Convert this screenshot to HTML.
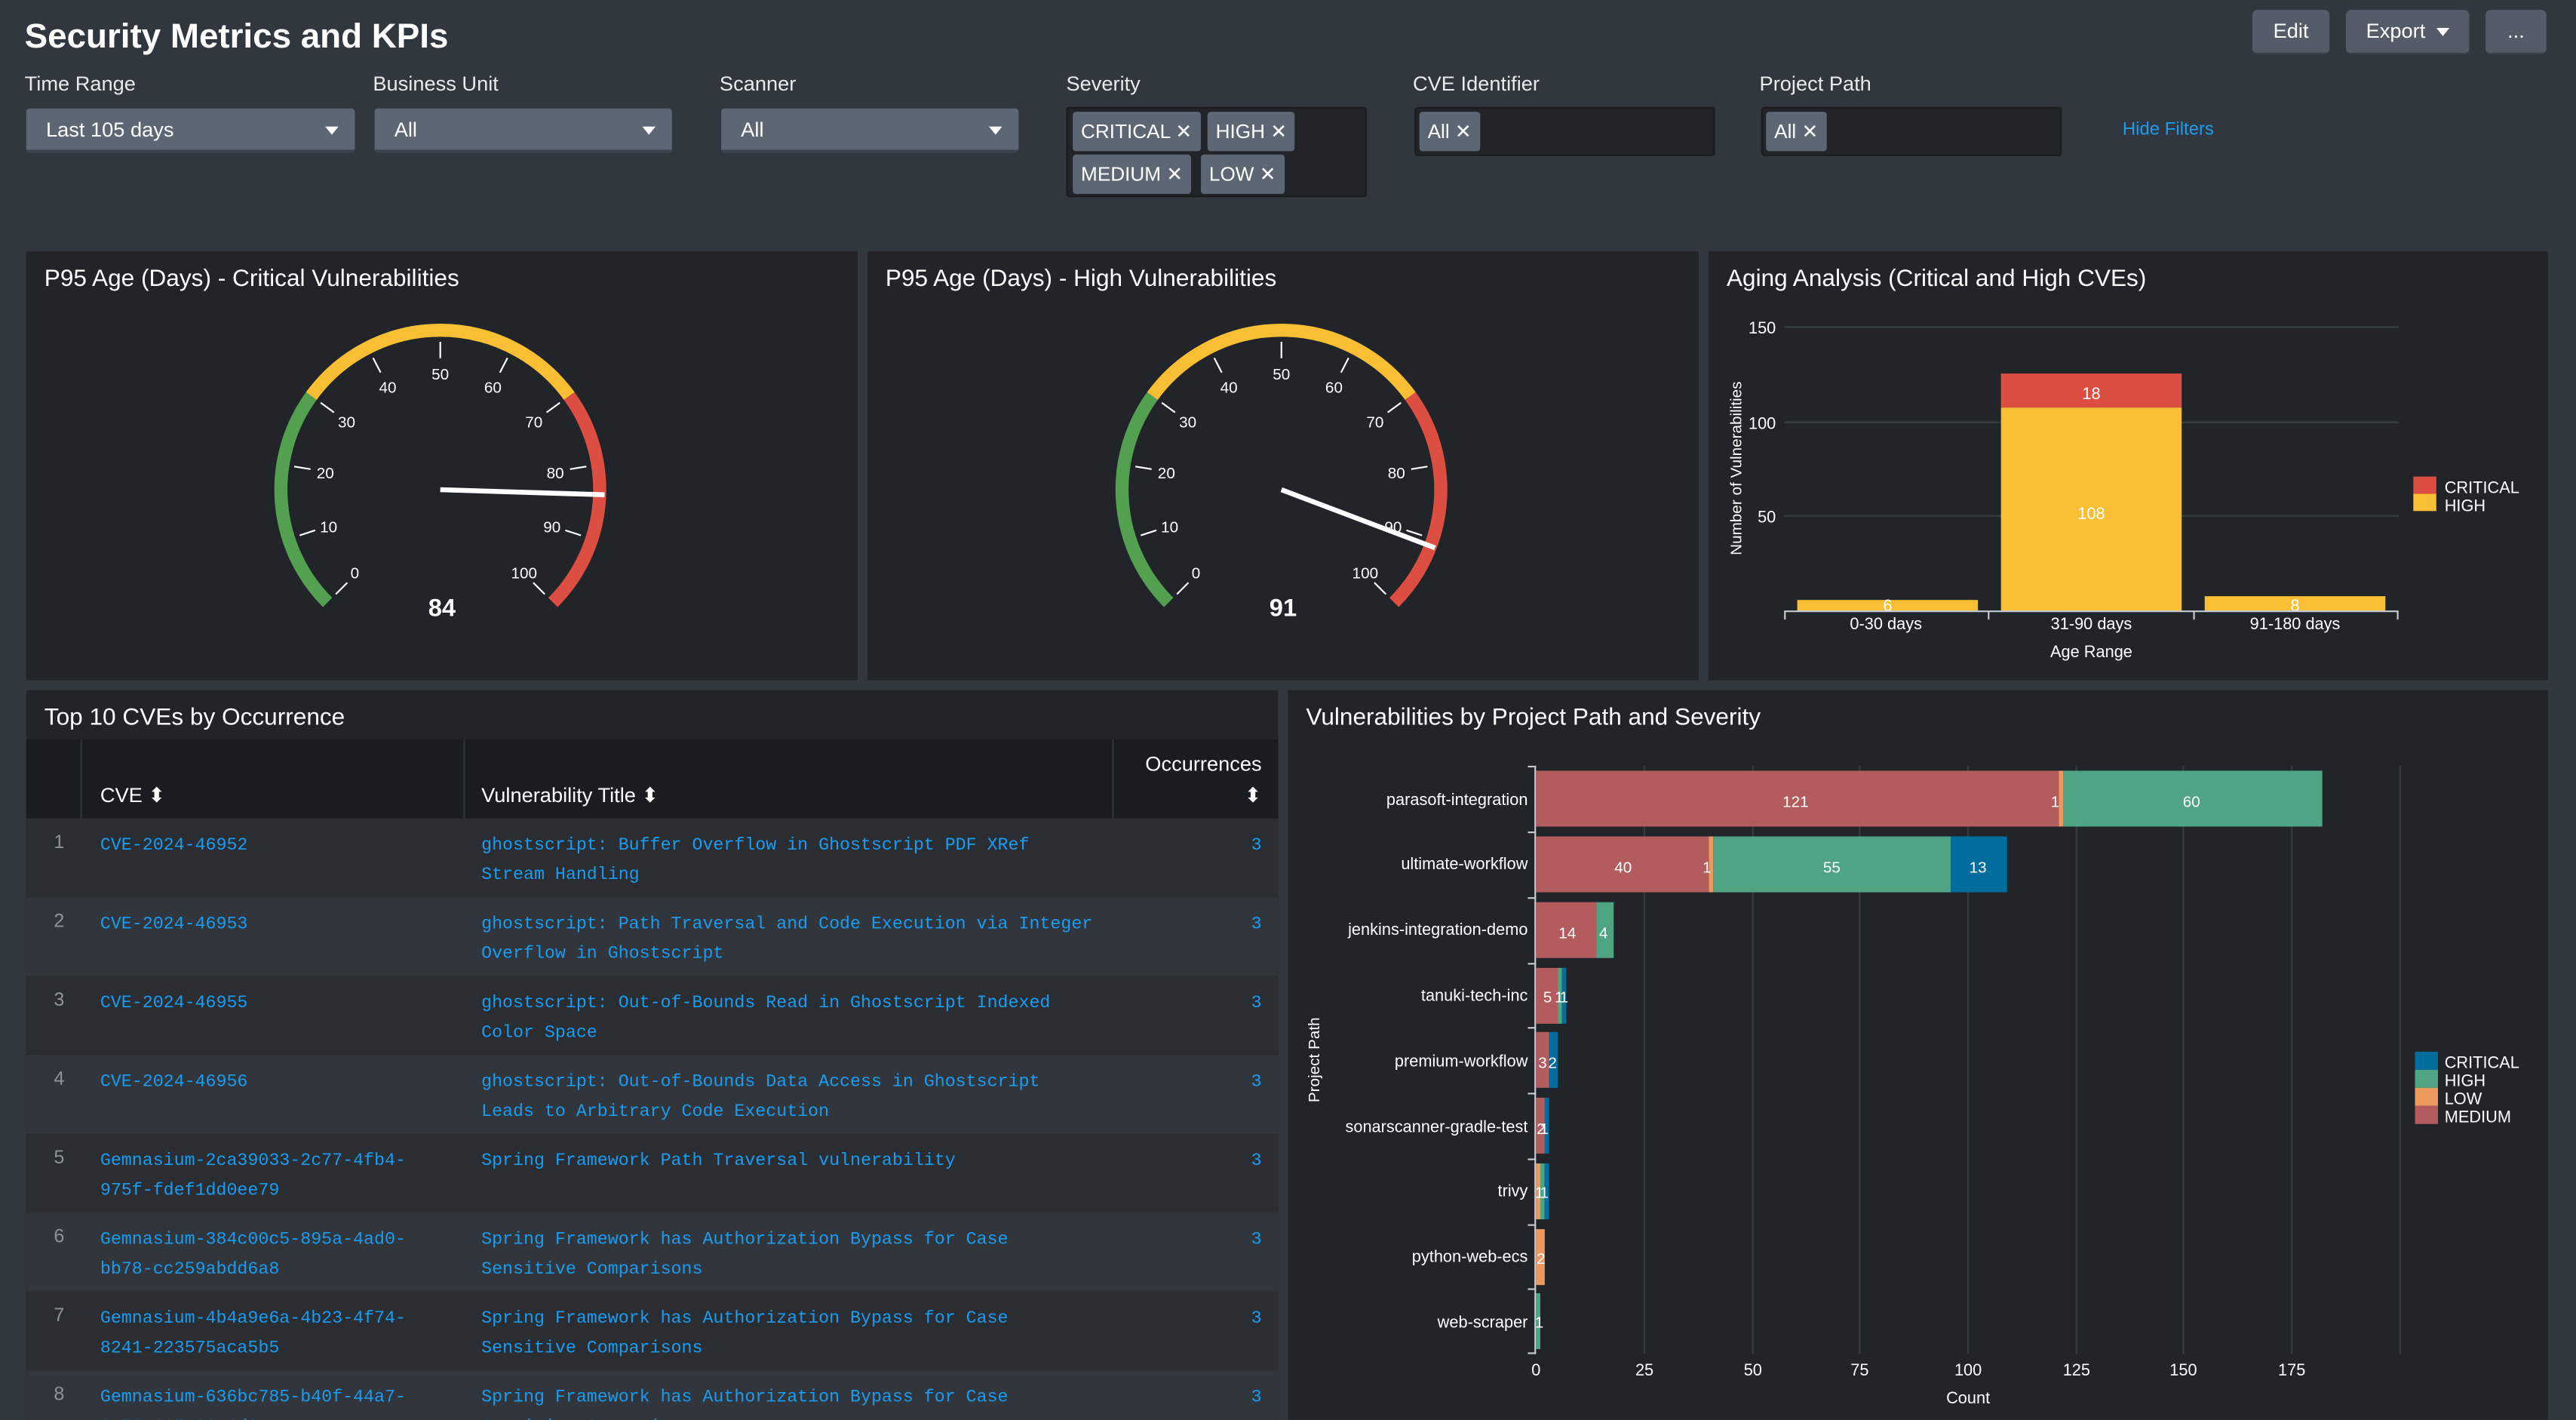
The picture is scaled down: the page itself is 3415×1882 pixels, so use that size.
<!DOCTYPE html>
<html><head><meta charset="utf-8"><style>
*{margin:0;padding:0;box-sizing:border-box}
html,body{width:3415px;height:1882px;overflow:hidden;background:#31373e}
#w{position:absolute;left:0;top:0;width:1568px;height:864px;transform:scale(2.1779);transform-origin:0 0;font-family:"Liberation Sans",sans-serif;color:#fff}
.a{position:absolute}
.lbl{font-size:12.5px;color:#e8eaec}
.inp{position:absolute;height:27px;background:#5c6773;border-radius:2px;border-bottom:2px solid #3c444d;font-size:12.5px;padding:6px 12px}
.inp .car{position:absolute;right:10px;top:11px;width:0;height:0;border-left:4px solid transparent;border-right:4px solid transparent;border-top:5px solid #fff}
.ms{position:absolute;background:#212428;border:1px solid #1a1d20;border-radius:2px}
.chip{position:absolute;height:24px;background:#5c6773;border-radius:2px;font-size:12px;padding:5px 5px;white-space:nowrap}
.btn{position:absolute;top:6px;height:27px;background:#535c67;border-radius:3px;font-size:12.5px;text-align:center;line-height:27px;border-bottom:1px solid #3c444d}
.pnl{position:absolute;background:#212428}
.pt{position:absolute;left:11px;top:9px;font-size:14.5px;color:#fff}
.row{position:absolute;left:0;width:762px;height:48px}
.mono{font-family:"Liberation Mono",monospace;font-size:10.7px;color:#1a9cf0;line-height:18px}
.idx{position:absolute;left:0;width:40px;text-align:center;top:9px;font-size:11.5px;color:#8b949e}
.cv{position:absolute;left:45px;top:8px}
.tt{position:absolute;left:277px;top:8px}
.oc{position:absolute;right:10px;top:8px}
</style></head><body><div id="w">
<div class="a" style="left:15px;top:11px;font-size:21px;font-weight:bold">Security Metrics and KPIs</div>
<div class="btn" style="left:1371px;width:47px">Edit</div>
<div class="btn" style="left:1428px;width:75px">Export <span style="display:inline-block;border-left:4px solid transparent;border-right:4px solid transparent;border-top:5px solid #fff;vertical-align:middle;margin-left:3px"></span></div>
<div class="btn" style="left:1513px;width:37px">...</div>

<div class="a lbl" style="left:15px;top:44px">Time Range</div>
<div class="a lbl" style="left:227px;top:44px">Business Unit</div>
<div class="a lbl" style="left:438px;top:44px">Scanner</div>
<div class="a lbl" style="left:649px;top:44px">Severity</div>
<div class="a lbl" style="left:860px;top:44px">CVE Identifier</div>
<div class="a lbl" style="left:1071px;top:44px">Project Path</div>
<div class="inp" style="left:16px;top:66px;width:200px">Last 105 days<div class="car"></div></div>
<div class="inp" style="left:228px;top:66px;width:181px">All<div class="car"></div></div>
<div class="inp" style="left:439px;top:66px;width:181px">All<div class="car"></div></div>
<div class="ms" style="left:649px;top:65px;width:183px;height:55px">
<div class="chip" style="left:3px;top:2px">CRITICAL ✕</div>
<div class="chip" style="left:85px;top:2px">HIGH ✕</div>
<div class="chip" style="left:3px;top:28px">MEDIUM ✕</div>
<div class="chip" style="left:81px;top:28px">LOW ✕</div>
</div>
<div class="ms" style="left:861px;top:65px;width:183px;height:30px"><div class="chip" style="left:2px;top:2px">All ✕</div></div>
<div class="ms" style="left:1072px;top:65px;width:183px;height:30px"><div class="chip" style="left:2px;top:2px">All ✕</div></div>
<div class="a" style="left:1292px;top:73px;font-size:11px;color:#1a9cf0">Hide Filters</div>

<div class="pnl" style="left:16px;top:153px;width:506px;height:261px"><div class="pt">P95 Age (Days) - Critical Vulnerabilities</div></div>
<div class="pnl" style="left:528px;top:153px;width:506px;height:261px"><div class="pt">P95 Age (Days) - High Vulnerabilities</div></div>
<div class="pnl" style="left:1040px;top:153px;width:511px;height:261px"><div class="pt">Aging Analysis (Critical and High CVEs)</div></div>
<div class="pnl" style="left:16px;top:420px;width:762px;height:444px;overflow:hidden"><div class="pt">Top 10 CVEs by Occurrence</div>
<div class="a" style="left:0;top:30px;width:762px;height:48px;background:#191c20"></div>
<div class="a" style="left:33px;top:30px;width:1px;height:48px;background:#2e3540"></div>
<div class="a" style="left:266px;top:30px;width:1px;height:48px;background:#2e3540"></div>
<div class="a" style="left:661px;top:30px;width:1px;height:48px;background:#2e3540"></div>
<div class="a" style="left:45px;top:56px;font-size:12.5px">CVE ⬍</div>
<div class="a" style="left:277px;top:56px;font-size:12.5px">Vulnerability Title ⬍</div>
<div class="a" style="right:10px;top:38px;font-size:12.5px">Occurrences</div>
<div class="a" style="right:10px;top:56px;font-size:12.5px">⬍</div>
<div class="row" style="top:78px;background:#2a2e33"><div class="idx">1</div><div class="mono cv">CVE-2024-46952</div><div class="mono tt">ghostscript: Buffer Overflow in Ghostscript PDF XRef<br>Stream Handling</div><div class="mono oc">3</div></div>
<div class="row" style="top:126px;background:#31363c"><div class="idx">2</div><div class="mono cv">CVE-2024-46953</div><div class="mono tt">ghostscript: Path Traversal and Code Execution via Integer<br>Overflow in Ghostscript</div><div class="mono oc">3</div></div>
<div class="row" style="top:174px;background:#2a2e33"><div class="idx">3</div><div class="mono cv">CVE-2024-46955</div><div class="mono tt">ghostscript: Out-of-Bounds Read in Ghostscript Indexed<br>Color Space</div><div class="mono oc">3</div></div>
<div class="row" style="top:222px;background:#31363c"><div class="idx">4</div><div class="mono cv">CVE-2024-46956</div><div class="mono tt">ghostscript: Out-of-Bounds Data Access in Ghostscript<br>Leads to Arbitrary Code Execution</div><div class="mono oc">3</div></div>
<div class="row" style="top:270px;background:#2a2e33"><div class="idx">5</div><div class="mono cv">Gemnasium-2ca39033-2c77-4fb4-<br>975f-fdef1dd0ee79</div><div class="mono tt">Spring Framework Path Traversal vulnerability</div><div class="mono oc">3</div></div>
<div class="row" style="top:318px;background:#31363c"><div class="idx">6</div><div class="mono cv">Gemnasium-384c00c5-895a-4ad0-<br>bb78-cc259abdd6a8</div><div class="mono tt">Spring Framework has Authorization Bypass for Case<br>Sensitive Comparisons</div><div class="mono oc">3</div></div>
<div class="row" style="top:366px;background:#2a2e33"><div class="idx">7</div><div class="mono cv">Gemnasium-4b4a9e6a-4b23-4f74-<br>8241-223575aca5b5</div><div class="mono tt">Spring Framework has Authorization Bypass for Case<br>Sensitive Comparisons</div><div class="mono oc">3</div></div>
<div class="row" style="top:414px;background:#31363c"><div class="idx">8</div><div class="mono cv">Gemnasium-636bc785-b40f-44a7-<br>3c71-115c03a1d0ee</div><div class="mono tt">Spring Framework has Authorization Bypass for Case<br>Sensitive Comparisons</div><div class="mono oc">3</div></div>
</div>
<div class="pnl" style="left:784px;top:420px;width:767px;height:444px"><div class="pt">Vulnerabilities by Project Path and Severity</div></div>

<svg class="a" style="left:0;top:0" width="1568" height="864" font-family="Liberation Sans, sans-serif">
<g transform="translate(268,298)" fill="#fff" font-size="9.5" text-anchor="middle">
<path d="M -68.6 68.6 A 97 97 0 0 1 -78.5 -57.0" stroke="#53a051" stroke-width="8" fill="none"/>
<path d="M -78.5 -57.0 A 97 97 0 0 1 78.5 -57.0" stroke="#f8be34" stroke-width="8" fill="none"/>
<path d="M 78.5 -57.0 A 97 97 0 0 1 68.6 68.6" stroke="#dc4e41" stroke-width="8" fill="none"/>
<g stroke="#fff" stroke-width="1">
<line x1="-63.6" y1="63.6" x2="-56.6" y2="56.6"/><line x1="-85.6" y1="27.8" x2="-76.1" y2="24.7"/><line x1="-88.9" y1="-14.1" x2="-79" y2="-12.5"/><line x1="-72.8" y1="-52.9" x2="-64.7" y2="-47"/><line x1="-40.9" y1="-80.2" x2="-36.3" y2="-71.3"/><line x1="0" y1="-90" x2="0" y2="-80"/><line x1="40.9" y1="-80.2" x2="36.3" y2="-71.3"/><line x1="72.8" y1="-52.9" x2="64.7" y2="-47"/><line x1="88.9" y1="-14.1" x2="79" y2="-12.5"/><line x1="85.6" y1="27.8" x2="76.1" y2="24.7"/><line x1="63.6" y1="63.6" x2="56.6" y2="56.6"/>
</g>
<text x="-52" y="54">0</text><text x="-68" y="26">10</text><text x="-70" y="-7">20</text><text x="-57" y="-38">30</text><text x="-32" y="-59">40</text><text x="0" y="-67">50</text><text x="32" y="-59">60</text><text x="57" y="-38">70</text><text x="70" y="-7">80</text><text x="68" y="26">90</text><text x="51" y="54">100</text>
<line x1="0" y1="0" x2="100" y2="3.1" stroke="#fff" stroke-width="3"/>
<text x="1" y="77" font-size="15" font-weight="bold">84</text>
</g>
<g transform="translate(780,298)" fill="#fff" font-size="9.5" text-anchor="middle">
<path d="M -68.6 68.6 A 97 97 0 0 1 -78.5 -57.0" stroke="#53a051" stroke-width="8" fill="none"/>
<path d="M -78.5 -57.0 A 97 97 0 0 1 78.5 -57.0" stroke="#f8be34" stroke-width="8" fill="none"/>
<path d="M 78.5 -57.0 A 97 97 0 0 1 68.6 68.6" stroke="#dc4e41" stroke-width="8" fill="none"/>
<g stroke="#fff" stroke-width="1">
<line x1="-63.6" y1="63.6" x2="-56.6" y2="56.6"/><line x1="-85.6" y1="27.8" x2="-76.1" y2="24.7"/><line x1="-88.9" y1="-14.1" x2="-79" y2="-12.5"/><line x1="-72.8" y1="-52.9" x2="-64.7" y2="-47"/><line x1="-40.9" y1="-80.2" x2="-36.3" y2="-71.3"/><line x1="0" y1="-90" x2="0" y2="-80"/><line x1="40.9" y1="-80.2" x2="36.3" y2="-71.3"/><line x1="72.8" y1="-52.9" x2="64.7" y2="-47"/><line x1="88.9" y1="-14.1" x2="79" y2="-12.5"/><line x1="85.6" y1="27.8" x2="76.1" y2="24.7"/><line x1="63.6" y1="63.6" x2="56.6" y2="56.6"/>
</g>
<text x="-52" y="54">0</text><text x="-68" y="26">10</text><text x="-70" y="-7">20</text><text x="-57" y="-38">30</text><text x="-32" y="-59">40</text><text x="0" y="-67">50</text><text x="32" y="-59">60</text><text x="57" y="-38">70</text><text x="70" y="-7">80</text><text x="68" y="26">90</text><text x="51" y="54">100</text>
<line x1="0" y1="0" x2="93.5" y2="35.4" stroke="#fff" stroke-width="3"/>
<text x="1" y="77" font-size="15" font-weight="bold">91</text>
</g>

<g font-size="10" fill="#fff">
<g stroke="#343c42" stroke-width="1.2"><line x1="1086" y1="199" x2="1460" y2="199"/><line x1="1086" y1="257" x2="1460" y2="257"/><line x1="1086" y1="314" x2="1460" y2="314"/></g>
<text x="1081" y="203" text-anchor="end">150</text><text x="1081" y="261" text-anchor="end">100</text><text x="1081" y="318" text-anchor="end">50</text>
<rect x="1094" y="365.1" width="110" height="6.9" fill="#f8be34"/>
<rect x="1218" y="248" width="110" height="124" fill="#f8be34"/>
<rect x="1218" y="227.3" width="110" height="20.7" fill="#dc4e41"/>
<rect x="1342" y="362.8" width="110" height="9.2" fill="#f8be34"/>
<text x="1149" y="372" text-anchor="middle">6</text><text x="1273" y="316" text-anchor="middle">108</text><text x="1273" y="243" text-anchor="middle">18</text><text x="1397" y="372" text-anchor="middle">8</text>
<g stroke="#c3cbd4" stroke-width="1"><line x1="1086" y1="372" x2="1460" y2="372"/><line x1="1086.5" y1="372" x2="1086.5" y2="377"/><line x1="1210.5" y1="372" x2="1210.5" y2="377"/><line x1="1335.5" y1="372" x2="1335.5" y2="377"/><line x1="1459.5" y1="372" x2="1459.5" y2="377"/></g>
<text x="1148" y="383" text-anchor="middle">0-30 days</text><text x="1273" y="383" text-anchor="middle">31-90 days</text><text x="1397" y="383" text-anchor="middle">91-180 days</text>
<text x="1273" y="400" text-anchor="middle">Age Range</text>
<text transform="translate(1060,285) rotate(-90)" text-anchor="middle" font-size="9.5">Number of Vulnerabilities</text>
<rect x="1469" y="290" width="14" height="10.5" fill="#dc4e41"/><rect x="1469" y="300.5" width="14" height="10.5" fill="#f8be34"/>
<text x="1488" y="300">CRITICAL</text><text x="1488" y="311">HIGH</text>
</g>

<g font-size="10" fill="#fff">
<g stroke="#343c42" stroke-width="1"><line x1="1001" y1="466" x2="1001" y2="824"/><line x1="1067" y1="466" x2="1067" y2="824"/><line x1="1132" y1="466" x2="1132" y2="824"/><line x1="1198" y1="466" x2="1198" y2="824"/><line x1="1264" y1="466" x2="1264" y2="824"/><line x1="1329" y1="466" x2="1329" y2="824"/><line x1="1395" y1="466" x2="1395" y2="824"/><line x1="1461" y1="466" x2="1461" y2="824"/></g>
<g stroke="#c3cbd4" stroke-width="1"><line x1="934.5" y1="466" x2="934.5" y2="824"/>
<line x1="930" y1="466.5" x2="935" y2="466.5"/><line x1="930" y1="506.5" x2="935" y2="506.5"/><line x1="930" y1="546.5" x2="935" y2="546.5"/><line x1="930" y1="586.5" x2="935" y2="586.5"/><line x1="930" y1="625.5" x2="935" y2="625.5"/><line x1="930" y1="665.5" x2="935" y2="665.5"/><line x1="930" y1="705.5" x2="935" y2="705.5"/><line x1="930" y1="745.5" x2="935" y2="745.5"/><line x1="930" y1="784.5" x2="935" y2="784.5"/><line x1="930" y1="823.5" x2="935" y2="823.5"/></g>
<rect x="935" y="469" width="318.2" height="34" fill="#b35c5e"/><rect x="1253.2" y="469" width="2.6" height="34" fill="#ec9960"/><rect x="1255.8" y="469" width="157.8" height="34" fill="#4fa484"/>
<rect x="935" y="509" width="105.2" height="34" fill="#b35c5e"/><rect x="1040.2" y="509" width="2.6" height="34" fill="#ec9960"/><rect x="1042.8" y="509" width="144.7" height="34" fill="#4fa484"/><rect x="1187.5" y="509" width="34.2" height="34" fill="#006d9c"/>
<rect x="935" y="549" width="36.8" height="34" fill="#b35c5e"/><rect x="971.8" y="549" width="10.5" height="34" fill="#4fa484"/>
<rect x="935" y="589" width="13.2" height="34" fill="#b35c5e"/><rect x="948.2" y="589" width="2.6" height="34" fill="#4fa484"/><rect x="950.8" y="589" width="2.6" height="34" fill="#006d9c"/>
<rect x="935" y="628" width="7.9" height="34" fill="#b35c5e"/><rect x="942.9" y="628" width="5.3" height="34" fill="#006d9c"/>
<rect x="935" y="668" width="5.3" height="34" fill="#b35c5e"/><rect x="940.3" y="668" width="2.6" height="34" fill="#006d9c"/>
<rect x="935" y="708" width="2.6" height="34" fill="#ec9960"/><rect x="937.6" y="708" width="2.6" height="34" fill="#4fa484"/><rect x="940.2" y="708" width="2.7" height="34" fill="#006d9c"/>
<rect x="935" y="748" width="5.3" height="34" fill="#ec9960"/>
<rect x="935" y="787" width="2.6" height="34" fill="#4fa484"/>
<g text-anchor="middle" font-size="9.5"><text x="1093" y="491">121</text><text x="1251" y="491">1</text><text x="1334" y="491">60</text>
<text x="988" y="531">40</text><text x="1039" y="531">1</text><text x="1115" y="531">55</text><text x="1204" y="531">13</text>
<text x="954" y="571">14</text><text x="976" y="571">4</text>
<text x="942" y="610">5</text><text x="949" y="610">1</text><text x="952" y="610">1</text>
<text x="939" y="650">3</text><text x="945" y="650">2</text>
<text x="938" y="690">2</text><text x="940" y="690">1</text>
<text x="937" y="729">1</text><text x="940" y="729">1</text>
<text x="938" y="769">2</text><text x="937" y="808">1</text></g>
<g text-anchor="end"><text x="930" y="490">parasoft-integration</text><text x="930" y="529">ultimate-workflow</text><text x="930" y="569">jenkins-integration-demo</text><text x="930" y="609">tanuki-tech-inc</text><text x="930" y="649">premium-workflow</text><text x="930" y="689">sonarscanner-gradle-test</text><text x="930" y="728">trivy</text><text x="930" y="768">python-web-ecs</text><text x="930" y="808">web-scraper</text></g>
<g text-anchor="middle"><text x="935" y="837">0</text><text x="1001" y="837">25</text><text x="1067" y="837">50</text><text x="1132" y="837">75</text><text x="1198" y="837">100</text><text x="1264" y="837">125</text><text x="1329" y="837">150</text><text x="1395" y="837">175</text>
<text x="1198" y="854">Count</text></g>
<text transform="translate(803,645) rotate(-90)" text-anchor="middle" font-size="9.5">Project Path</text>
<rect x="1470" y="640" width="14" height="11" fill="#006d9c"/><rect x="1470" y="651" width="14" height="11" fill="#4fa484"/><rect x="1470" y="662" width="14" height="11" fill="#ec9960"/><rect x="1470" y="673" width="14" height="11" fill="#b35c5e"/>
<text x="1488" y="650">CRITICAL</text><text x="1488" y="661">HIGH</text><text x="1488" y="672">LOW</text><text x="1488" y="683">MEDIUM</text>
</g>
</svg>
</div></body></html>
